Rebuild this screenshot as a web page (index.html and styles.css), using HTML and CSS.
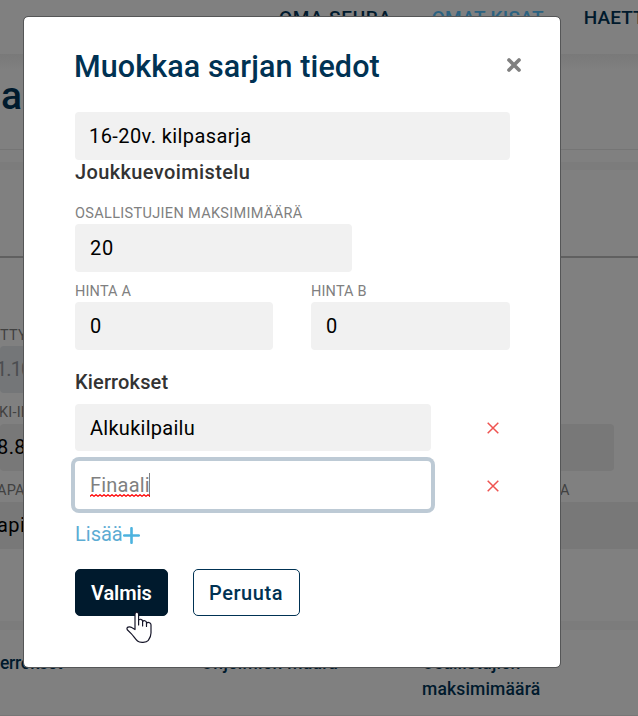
FILE: index.html
```html
<!DOCTYPE html>
<html lang="fi">
<head>
<meta charset="utf-8">
<title>Muokkaa sarjan tiedot</title>
<link rel="stylesheet" href="styles.css">
</head>
<body>
<div class="page">
  <header class="topnav">
    <span class="nav-item">OMA SEURA</span>
    <span class="nav-item active">OMAT KISAT</span>
    <span class="nav-item">HAETT</span>
  </header>
  <div class="band band-shadow"></div>
  <div class="page-title">a</div>
  <div class="strip"></div>
  <div class="band band-soft"></div>
  <div class="tabs"></div>
  <main class="details">
    <div class="bg-label">TTY</div>
    <div class="bg-input disabled"><span>1.10.</span></div>
    <div class="bg-label"><span class="nudge">KI-ILMO</span></div>
    <div class="bg-input short"><span>8.8.</span></div>
    <div class="bg-label split"><span class="nudge">APAHTUMA</span><span class="label-end">A</span></div>
    <div class="bg-input"><span>apinkatu</span></div>
  </main>
  <div class="gap-area"></div>
  <div class="band band-thin"></div>
  <div class="table-head">
    <span class="th th-rounds">errokset</span>
    <span class="th th-programs">Ohjelmien määrä</span>
    <span class="th th-max">Osallistujien<br>maksimimäärä</span>
  </div>
</div>

<section class="modal" role="dialog" aria-label="Muokkaa sarjan tiedot">
  <div class="modal-head">
    <h1 class="title">Muokkaa sarjan tiedot</h1>
    <svg class="close" width="16" height="16" viewBox="0 0 16 16"><path d="M3 3L13 13M13 3L3 13"/></svg>
  </div>
  <div class="field"><span class="t-name">16-20v. kilpasarja</span></div>
  <h2 class="sub sport">Joukkuevoimistelu</h2>
  <div class="label label-max">OSALLISTUJIEN MAKSIMIMÄÄRÄ</div>
  <div class="field field-max">20</div>
  <div class="prices">
    <div><div class="label label-price">HINTA A</div><div class="field">0</div></div>
    <div><div class="label label-price">HINTA B</div><div class="field">0</div></div>
  </div>
  <h2 class="sub rounds">Kierrokset</h2>
  <div class="round">
    <div class="field field-round"><span class="t-alku">Alkukilpailu</span></div>
    <svg class="remove" width="12" height="12" viewBox="0 0 12 12"><path d="M.7.7L11.3 11.3M11.3.7L.7 11.3"/></svg>
  </div>
  <div class="round round-focus">
    <div class="field field-round focused">
      <span class="typed">Finaali<svg class="squiggle" width="60" height="3" viewBox="0 0 60 3"><defs><pattern id="wave" width="4" height="3" patternUnits="userSpaceOnUse"><path d="M-1 1.5L0 2.3L2 .7L4 2.3L5 1.5"/></pattern></defs><rect width="60" height="3" fill="url(#wave)"/></svg></span><span class="caret"></span>
    </div>
    <svg class="remove" width="12" height="12" viewBox="0 0 12 12"><path d="M.7.7L11.3 11.3M11.3.7L.7 11.3"/></svg>
  </div>
  <div class="add"><span>Lisää</span><svg width="17" height="17" viewBox="0 0 17 17"><path d="M8.5 1.2V15.8M1.2 8.5H15.8"/></svg></div>
  <div class="actions">
    <div class="btn primary">Valmis</div>
    <div class="btn secondary">Peruuta</div>
  </div>
</section>

<svg class="pointer" width="26" height="33" viewBox="0 0 26 33"><path d="M9 18.5V3.2C9 .3 12.6.3 12.6 3.2V14V9.4C13.4 7.5 16.4 8.2 16.6 10V15V10.8C17.5 9 20.3 9.6 20.5 11.4V15.5V12.4C21.5 10.9 25 11.2 25 13.8V22C25 25.6 23.5 27.5 22.3 29.3C20.5 31.7 13.8 32 11.5 30C8.8 27.6 7.7 25.2 5.2 22.6L1.3 18.8C-.2 16.3 3.4 15 5.7 16.5Z"/></svg>
</body>
</html>
```

FILE: styles.css
```css
* { box-sizing: border-box; }
body {
  margin: 0;
  width: 638px;
  height: 716px;
  overflow: hidden;
  position: relative;
  background: #808080;
  font-family: Roboto, "Liberation Sans", sans-serif;
  color: #000;
}
.page { height: 716px; overflow: hidden; border-bottom: 1px solid #777; white-space: nowrap; }

.topnav {
  height: 54px;
  padding: 6px 0 0 279px;
  display: flex;
  gap: 40px;
  font-size: 19px;
  font-weight: 500;
  line-height: 24px;
  color: #001a2d;
}
.nav-item { flex: 0 0 111px; letter-spacing: .7px; }
.nav-item:nth-child(3) { letter-spacing: .1px; }
.active { color: #2b6280; flex-basis: 112px; letter-spacing: .3px; }
.band { background: #7c7c7c; }
.band-shadow { height: 16px; background: linear-gradient(#797979, #808080); }
.page-title { height: 80px; border-bottom: 1px solid #757575; padding: 2px 0 0 1px; font-size: 39px; font-weight: 500; line-height: 48px; color: #001a2d; }
.strip { height: 12px; }
.band-soft { height: 8px; }
.tabs { height: 88px; border-bottom: 2px solid #606060; }
.details { height: 291px; padding-top: 66px; }
.bg-label { height: 22px; line-height: 23px; font-size: 14.5px; letter-spacing: .2px; color: #414141; }
.nudge { margin-left: -1px; }
.bg-input + .bg-label { height: 31px; padding-top: 8px; }
.split { display: flex; }
.label-end { margin-left: 482px; }
.split .nudge { width: 78px; margin-left: -3px; margin-right: 3px; }
.bg-input { height: 47px; line-height: 47px; font-size: 20px; background: #787878; }
.bg-input span { margin-left: -3px; letter-spacing: .4px; }
.bg-input.disabled span { margin-left: -4px; letter-spacing: -.9px; }
.disabled { width: 300px; border-radius: 4px; background: #747678; color: #4b4d50; }
.short { width: 614px; border-radius: 4px; }
.gap-area { height: 72px; }
.band-thin { height: 9px; }
.table-head { height: 86px; display: flex; padding-top: 20px; font-size: 17.5px; font-weight: 500; line-height: 26px; color: #001a2d; }
.th-rounds { width: 201px; letter-spacing: -.3px; }
.th-programs { width: 221px; letter-spacing: .3px; }
.th-max { letter-spacing: .16px; }

.modal {
  position: absolute;
  left: 23px;
  top: 16px;
  width: 538px;
  height: 652px;
  padding: 23px 50px 0 51px;
  border: 1px solid #555657;
  border-radius: 5px;
  background: #fff;
  background-clip: padding-box;
}
.modal-head { height: 72px; display: flex; justify-content: space-between; width: 447px; }
.title { margin: 0 0 0 -1px; font-size: 30.5px; line-height: 54px; font-weight: 500; color: #003253; letter-spacing: .1px; white-space: nowrap; }
.close { margin-top: 17px; }
.close path { fill: none; stroke: #808080; stroke-width: 3.7; stroke-linecap: round; }
.field {
  height: 48px;
  border-radius: 4px;
  background: #f1f1f1;
  padding-left: 15px;
  font-size: 20px;
  line-height: 48px;
}
.prices .field, .field-max { letter-spacing: .7px; }
.t-name { letter-spacing: .42px; margin-left: -1px; }
.t-alku { letter-spacing: .27px; }
.sub { margin: 0; font-size: 20px; font-weight: 500; color: #333; white-space: nowrap; }
.sport { height: 42px; line-height: 25px; letter-spacing: .38px; }
.label { font-size: 14.5px; line-height: 24px; color: #808080; height: 22px; white-space: nowrap; letter-spacing: .33px; }
.label-price { letter-spacing: .15px; }
.field-max { width: 277px; }
.prices { display: grid; grid-template-columns: 198px 199px; column-gap: 38px; padding-top: 8px; }
.rounds { height: 54px; padding-top: 20px; line-height: 25px; letter-spacing: .15px; }
.round { display: flex; align-items: center; height: 47px; }
.field-round { width: 356px; height: 47px; line-height: 48px; flex: none; }
.remove { margin-left: 56px; }
.remove path { fill: none; stroke: #ef5350; stroke-width: 1.5; }
.round-focus { margin-top: 10px; height: 48px; }
.round-focus .remove { margin-top: 1px; }
.focused { height: 48px; background: #fff; color: #808080; box-shadow: 0 0 0 4px #bdcad5; display: flex; align-items: center; }
.typed { position: relative; width: 59px; letter-spacing: .2px; }
.squiggle { position: absolute; left: 0; top: 33px; }
.squiggle pattern path { fill: none; stroke: #f00; stroke-width: 1.2; }
.caret { width: 1px; height: 24px; background: #808080; }
.add { height: 60px; padding-top: 12px; display: flex; line-height: 27px; font-size: 20px; color: #5cacd3; }
.add svg { margin-top: 6px; }
.add path { fill: none; stroke: #4cb3df; stroke-width: 2.6; stroke-linecap: round; }
.actions { display: flex; gap: 25px; font-size: 20px; font-weight: 500; }
.btn { height: 47px; border: 1px solid #003253; border-radius: 5px; line-height: 47px; padding-left: 15px; }
.primary { width: 93px; background: #001a2d; border-color: #001a2d; color: #fff; font-weight: 600; letter-spacing: -.1px; }
.secondary { width: 107px; color: #003253; letter-spacing: .55px; }

.pointer { position: absolute; left: 126px; top: 611px; }
.pointer path { fill: #fff; stroke: #151528; stroke-width: 1.2; stroke-linejoin: round; }
```
